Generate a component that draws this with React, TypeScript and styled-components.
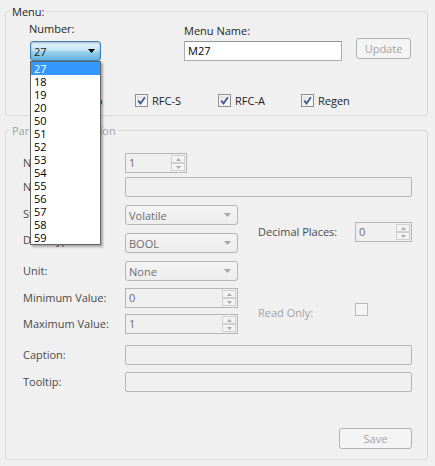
import React from "react";
import styled, { createGlobalStyle } from "styled-components";

const GlobalStyle = createGlobalStyle`
  html, body {
    margin: 0;
    padding: 0;
    background: #f0f0f0;
  }
  body {
    font-family: "Open Sans", "Liberation Sans", sans-serif;
    font-size: 11px;
    color: #1e1e1e;
  }
`;

const numbers = ["27", "18", "19", "20", "50", "51", "52", "53", "54", "55", "56", "57", "58", "59"];

const ArrowDown = ({ color, w = 7, h = 4 }: { color: string; w?: number; h?: number }) => (
    <svg width={w} height={h} viewBox={`0 0 ${w} ${h}`}>
        <polygon points={`0,0 ${w},0 ${w / 2},${h}`} fill={color} />
    </svg>
);

const SpinArrow = ({ up }: { up?: boolean }) => (
    <svg width="5" height="3" viewBox="0 0 5 3">
        <polygon points={up ? "0,3 5,3 2.5,0" : "0,0 5,0 2.5,3"} fill="#a9a9a9" />
    </svg>
);

const Check = ({ checked, disabled }: { checked?: boolean; disabled?: boolean }) => (
    <CheckBox $disabled={disabled}>
        {checked && (
            <svg width="9" height="9" viewBox="0 0 9 9">
                <path d="M1.2 4.6 L3.5 7.4 L7.9 1.2" fill="none" stroke="#3e5a94" strokeWidth="1.8" />
            </svg>
        )}
    </CheckBox>
);

const Spinner = ({ value, width }: { value: string; width: number }) => (
    <SpinBox $w={width}>
        <SpinValue>{value}</SpinValue>
        <SpinButtons>
            <SpinButton><SpinArrow up /></SpinButton>
            <SpinButton><SpinArrow /></SpinButton>
        </SpinButtons>
    </SpinBox>
);

const App = () => {
    return (
        <>
            <GlobalStyle />
            <Window>
                <GroupBox>
                    <Legend>Menu:</Legend>
                    <MenuBody>
                        <TopRow>
                            <NumberField>
                                <FieldLabel $shift={-1}>Number:</FieldLabel>
                                <ComboWrap>
                                    <Combo>
                                        <span>27</span>
                                        <ArrowDown color="#000" />
                                    </Combo>
                                    <DropList>
                                        {numbers.map((n, i) => (
                                            <DropItem key={n} $selected={i === 0}>{n}</DropItem>
                                        ))}
                                    </DropList>
                                </ComboWrap>
                            </NumberField>
                            <NameField>
                                <FieldLabel $top={2}>Menu Name:</FieldLabel>
                                <TextInput>M27</TextInput>
                            </NameField>
                            <Button $w={55} $top={16}>Update</Button>
                        </TopRow>
                        <CheckRow>
                            <CheckItem><Check checked /><span>Popup</span></CheckItem>
                            <CheckItem><Check checked /><span>RFC-S</span></CheckItem>
                            <CheckItem><Check checked /><span>RFC-A</span></CheckItem>
                            <CheckItem><Check checked /><span>Regen</span></CheckItem>
                        </CheckRow>
                    </MenuBody>
                </GroupBox>

                <GroupBox $gap={8}>
                    <Legend $disabled>Parameter Selection</Legend>
                    <ParamBody>
                        <FormGrid>
                            <RowLabel $row={1}>Number:</RowLabel>
                            <Cell $row={1}><Spinner value="1" width={62} /></Cell>

                            <RowLabel $row={2}>Name:</RowLabel>
                            <Cell $row={2} $wide><Field /></Cell>

                            <RowLabel $row={3} $shift={-1}>Storage:</RowLabel>
                            <Cell $row={3}>
                                <Select>Volatile<ArrowDown color="#a5a5a5" /></Select>
                            </Cell>

                            <RowLabel $row={4} $shift={-3}>Data Type:</RowLabel>
                            <Cell $row={4}>
                                <Select>BOOL<ArrowDown color="#a5a5a5" /></Select>
                            </Cell>

                            <SideLabel $row={3} $top={17}>Decimal Places:</SideLabel>
                            <SideCell $row={3} $top={17}><Spinner value="0" width={57} /></SideCell>

                            <RowLabel $row={5}>Unit:</RowLabel>
                            <Cell $row={5}>
                                <Select>None<ArrowDown color="#a5a5a5" /></Select>
                            </Cell>

                            <RowLabel $row={6}>Minimum Value:</RowLabel>
                            <Cell $row={6}><Spinner value="0" width={113} /></Cell>

                            <RowLabel $row={7}>Maximum Value:</RowLabel>
                            <Cell $row={7}><Spinner value="1" width={113} /></Cell>

                            <SideLabel $row={6} $top={15} $disabled>Read Only:</SideLabel>
                            <SideCell $row={6} $top={15}><Check disabled /></SideCell>

                            <RowLabel $row={8}>Caption:</RowLabel>
                            <Cell $row={8} $wide><Field /></Cell>

                            <RowLabel $row={9}>Tooltip:</RowLabel>
                            <Cell $row={9} $wide><Field /></Cell>
                        </FormGrid>
                        <Footer>
                            <Button $w={73}>Save</Button>
                        </Footer>
                    </ParamBody>
                </GroupBox>
            </Window>
        </>
    );
};

export default App;

const Window = styled.div`
    width: 435px;
    height: 466px;
    box-sizing: border-box;
    padding: 5px 7px 0 5px;
    background: #f0f0f0;
    overflow: hidden;
`;

const GroupBox = styled.fieldset<{ $gap?: number }>`
    margin: ${p => p.$gap ?? 0}px 0 0;
    padding: 0;
    min-width: 0;
    border: 1px solid #d5dadd;
    border-radius: 3px;
`;

const Legend = styled.legend<{ $disabled?: boolean }>`
    margin-left: 4px;
    padding: 0 2px;
    line-height: 13px;
    color: ${p => (p.$disabled ? "#a3a3a3" : "#1e1e1e")};
`;

const MenuBody = styled.div`
    padding: 4px 0 8px 24px;
`;

const TopRow = styled.div`
    display: flex;
    align-items: flex-start;
`;

const NumberField = styled.div`
    display: flex;
    flex-direction: column;
    gap: 6px;
    width: 71px;
`;

const NameField = styled.div`
    display: flex;
    flex-direction: column;
    gap: 4px;
    width: 158px;
    margin-left: 83px;
`;

const FieldLabel = styled.label<{ $shift?: number; $top?: number }>`
    line-height: 13px;
    margin-left: ${p => p.$shift ?? 0}px;
    padding-top: ${p => p.$top ?? 0}px;
`;

const ComboWrap = styled.div`
    position: relative;
    z-index: 5;
`;

const Combo = styled.div`
    height: 20px;
    box-sizing: border-box;
    border: 1px solid #3c7fb1;
    border-radius: 3px;
    background: linear-gradient(#e5f4fc 0%, #c4e5f6 45%, #98d1ef 55%, #68b3db 100%);
    display: flex;
    align-items: center;
    justify-content: space-between;
    padding: 0 5px 0 3px;
    box-shadow: inset 0 1px 2px rgba(0, 0, 0, 0.25);
`;

const DropList = styled.div`
    position: absolute;
    top: 100%;
    left: 0;
    width: 71px;
    box-sizing: border-box;
    border: 1px solid #646464;
    background: #fff;
    box-shadow: 2px 2px 2px rgba(0, 0, 0, 0.3);
`;

const DropItem = styled.div<{ $selected?: boolean }>`
    height: 13px;
    line-height: 13px;
    padding-left: 3px;
    color: ${p => (p.$selected ? "#fff" : "#000")};
    background: ${p => (p.$selected ? "#3399ff" : "transparent")};
`;

const TextInput = styled.div`
    height: 20px;
    box-sizing: border-box;
    border: 1px solid #abadb3;
    border-top-color: #8f939b;
    background: #fff;
    line-height: 18px;
    padding-left: 3px;
    color: #000;
`;

const Button = styled.div<{ $w: number; $top?: number }>`
    width: ${p => p.$w}px;
    height: 21px;
    box-sizing: border-box;
    margin-left: ${p => (p.$top ? 14 : 0)}px;
    margin-top: ${p => p.$top ?? 0}px;
    border: 1px solid #adb2b5;
    border-radius: 3px;
    background: #f4f4f4;
    color: #a3a3a3;
    display: flex;
    align-items: center;
    justify-content: center;
`;

const CheckRow = styled.div`
    display: grid;
    grid-template-columns: repeat(4, 83px);
    margin: 33px 0 0 22px;
`;

const CheckItem = styled.label`
    display: flex;
    align-items: center;
    gap: 4px;
    height: 13px;
    line-height: 13px;
`;

const CheckBox = styled.span<{ $disabled?: boolean }>`
    width: 13px;
    height: 13px;
    box-sizing: border-box;
    border: 1px solid ${p => (p.$disabled ? "#b8b8b8" : "#8e8f8f")};
    background: ${p =>
        p.$disabled
            ? "#f4f4f4"
            : "linear-gradient(135deg, #dcdcdc 0%, #f4f4f4 60%, #ffffff 100%)"};
    box-shadow: inset 0 0 0 1px ${p => (p.$disabled ? "#f7f7f7" : "#f4f4f4")};
    display: flex;
    align-items: center;
    justify-content: center;
    flex-shrink: 0;
`;

const ParamBody = styled.div`
    padding: 16px 15px 10px 17px;
`;

const FormGrid = styled.div`
    display: grid;
    grid-template-columns: 102px 113px 20px 97px 57px;
    grid-template-rows: 24px 28px 28px 28px 27px 26px 31px 27px 20px;
    align-items: start;
`;

const RowLabel = styled.span<{ $row: number; $shift?: number }>`
    grid-column: 1;
    grid-row: ${p => p.$row};
    margin-top: ${p => p.$shift ?? 0}px;
    height: 20px;
    line-height: 20px;
    color: #4a4a4a;
    white-space: nowrap;
`;

const Cell = styled.div<{ $row: number; $wide?: boolean }>`
    grid-row: ${p => p.$row};
    grid-column: ${p => (p.$wide ? "2 / -1" : "2")};
`;

const SideLabel = styled.span<{ $row: number; $top: number; $disabled?: boolean }>`
    grid-row: ${p => p.$row} / span 2;
    grid-column: 4;
    margin-top: ${p => p.$top}px;
    height: 20px;
    line-height: 20px;
    white-space: nowrap;
    color: ${p => (p.$disabled ? "#a3a3a3" : "#4a4a4a")};
`;

const SideCell = styled.div<{ $row: number; $top: number }>`
    grid-row: ${p => p.$row} / span 2;
    grid-column: 5;
    margin-top: ${p => p.$top}px;
`;

const Field = styled.div`
    height: 20px;
    box-sizing: border-box;
    border: 1px solid #b5b5b5;
    border-radius: 2px;
    background: #f0f0f0;
`;

const Select = styled.div`
    width: 113px;
    height: 20px;
    box-sizing: border-box;
    border: 1px solid #b5b5b5;
    border-radius: 3px;
    background: linear-gradient(#f4f4f4, #ededed);
    display: flex;
    align-items: center;
    justify-content: space-between;
    padding: 0 6px 0 3px;
    color: #6d6d6d;
`;

const SpinBox = styled.div<{ $w: number }>`
    width: ${p => p.$w}px;
    height: 20px;
    box-sizing: border-box;
    border: 1px solid #b5b5b5;
    background: #f0f0f0;
    display: flex;
`;

const SpinValue = styled.span`
    flex: 1;
    padding-left: 3px;
    line-height: 18px;
    color: #6d6d6d;
`;

const SpinButtons = styled.div`
    width: 15px;
    display: flex;
    flex-direction: column;
    padding: 1px 1px 1px 0;
    box-sizing: border-box;
`;

const SpinButton = styled.div`
    flex: 1;
    border: 1px solid #cfcfcf;
    background: #f3f3f3;
    display: flex;
    align-items: center;
    justify-content: center;
`;

const Footer = styled.div`
    display: flex;
    justify-content: flex-end;
    margin-top: 36px;
`;
